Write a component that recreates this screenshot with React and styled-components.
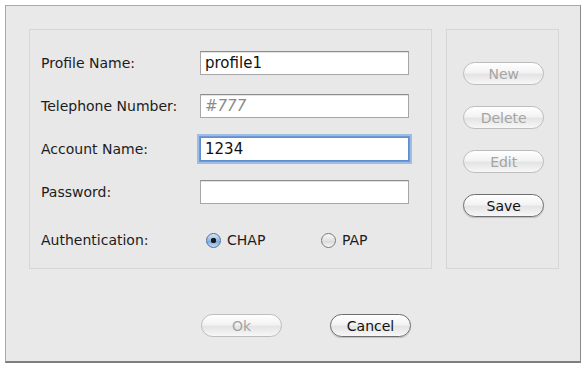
import React from "react";
import styled, { createGlobalStyle } from "styled-components";

const GlobalStyle = createGlobalStyle`
  html, body {
    margin: 0;
    padding: 0;
    background: #ffffff;
  }
  body {
    font-family: "DejaVu Sans", "Liberation Sans", sans-serif;
    font-size: 14px;
    color: #1c1c1c;
  }
  * {
    box-sizing: border-box;
  }
`;

const Page = styled.div`
  width: 586px;
  height: 369px;
  padding: 5px 0 0 5px;
`;

const Window = styled.div`
  width: 576px;
  height: 358px;
  background: #e9e9e9;
  border: 1px solid #a9a9a9;
  border-right-color: #8a8a8a;
  border-bottom: 2px solid #7e7e7e;
  display: flex;
  flex-direction: column;
  padding: 23px 21px 0 23px;
`;

const Panels = styled.div`
  display: flex;
  gap: 14px;
  height: 240px;
`;

const Box = styled.div`
  border: 1px solid #d6d6d6;
  background: #e8e8e8;
`;

const FormBox = styled(Box)`
  width: 404px;
  padding: 21px 22px 0 11px;
  display: flex;
  flex-direction: column;
  gap: 19px;
`;

const SideBox = styled(Box)`
  width: 113px;
  padding: 32px 0 0 16px;
  display: flex;
  flex-direction: column;
  gap: 21px;
`;

const Row = styled.div`
  display: grid;
  grid-template-columns: 159px 209px;
  align-items: center;
  height: 24px;
  margin-top: ${(p) => p.$offset || 0}px;
`;

const Label = styled.span`
  color: #1c1c1c;
`;

const Field = styled.div`
  height: 24px;
  background: #ffffff;
  border: 1px solid #a6a6a6;
  border-top-color: #8d8d8d;
  padding: 0 4px;
  line-height: 22px;
  font-size: 15px;
  color: ${(p) => (p.$hint ? "#8a8a8a" : "#111")};
  font-style: ${(p) => (p.$hint ? "italic" : "normal")};
  box-shadow: ${(p) =>
    p.$focus
      ? "0 0 0 1px #6d9ad6, 0 0 0 3px rgba(120, 165, 225, 0.65)"
      : "inset 0 1px 0 #e2e2e2"};
  border-color: ${(p) => (p.$focus ? "#5f8fcf" : undefined)};
`;

const Radios = styled.div`
  display: flex;
  padding-left: 6px;
`;

const Radio = styled.label`
  display: flex;
  align-items: center;
  flex-shrink: 0;
  gap: 6px;
  width: ${(p) => (p.$wide ? "115px" : "auto")};
  font-size: 14px;
  color: #1c1c1c;
`;

const Dot = styled.span`
  width: 15px;
  height: 15px;
  border-radius: 50%;
  border: 1px solid #7a7a7a;
  background: ${(p) =>
    p.$on
      ? "radial-gradient(circle at 50% 50%, #1a1a1a 0 2.5px, transparent 3px), linear-gradient(#d8e7f7, #8fb8e6 50%, #6fa1dc 51%, #c2dcf5)"
      : "linear-gradient(#f8f8f8, #e2e2e2 50%, #d6d6d6 51%, #f6f6f6)"};
  border-color: ${(p) => (p.$on ? "#4d6f9e" : "#7a7a7a")};
`;

const Button = styled.button`
  width: 81px;
  height: 23px;
  border-radius: 12px;
  font-family: "DejaVu Sans", "Liberation Sans", sans-serif;
  font-size: 14px;
  padding: 0;
  border: 1px solid ${(p) => (p.disabled ? "#bdbdbd" : "#6e6e6e")};
  color: ${(p) => (p.disabled ? "#a4a4a4" : "#111")};
  background: linear-gradient(#ffffff, #f3f3f3 45%, #e4e4e4 55%, #f7f7f7);
  box-shadow: ${(p) => (p.disabled ? "none" : "0 1px 1px rgba(0,0,0,0.18)")};
`;

const Footer = styled.div`
  display: flex;
  gap: 48px;
  padding: 45px 0 0 172px;
`;

export default function App() {
  return (
    <Page>
      <GlobalStyle />
      <Window>
        <Panels>
          <FormBox>
            <Row>
              <Label>Profile Name:</Label>
              <Field>profile1</Field>
            </Row>
            <Row>
              <Label>Telephone Number:</Label>
              <Field $hint>#777</Field>
            </Row>
            <Row>
              <Label>Account Name:</Label>
              <Field $focus>1234</Field>
            </Row>
            <Row>
              <Label>Password:</Label>
              <Field />
            </Row>
            <Row $offset={5}>
              <Label>Authentication:</Label>
              <Radios>
                <Radio $wide>
                  <Dot $on />
                  CHAP
                </Radio>
                <Radio>
                  <Dot />
                  PAP
                </Radio>
              </Radios>
            </Row>
          </FormBox>
          <SideBox>
            <Button disabled>New</Button>
            <Button disabled>Delete</Button>
            <Button disabled>Edit</Button>
            <Button>Save</Button>
          </SideBox>
        </Panels>
        <Footer>
          <Button disabled>Ok</Button>
          <Button>Cancel</Button>
        </Footer>
      </Window>
    </Page>
  );
}
